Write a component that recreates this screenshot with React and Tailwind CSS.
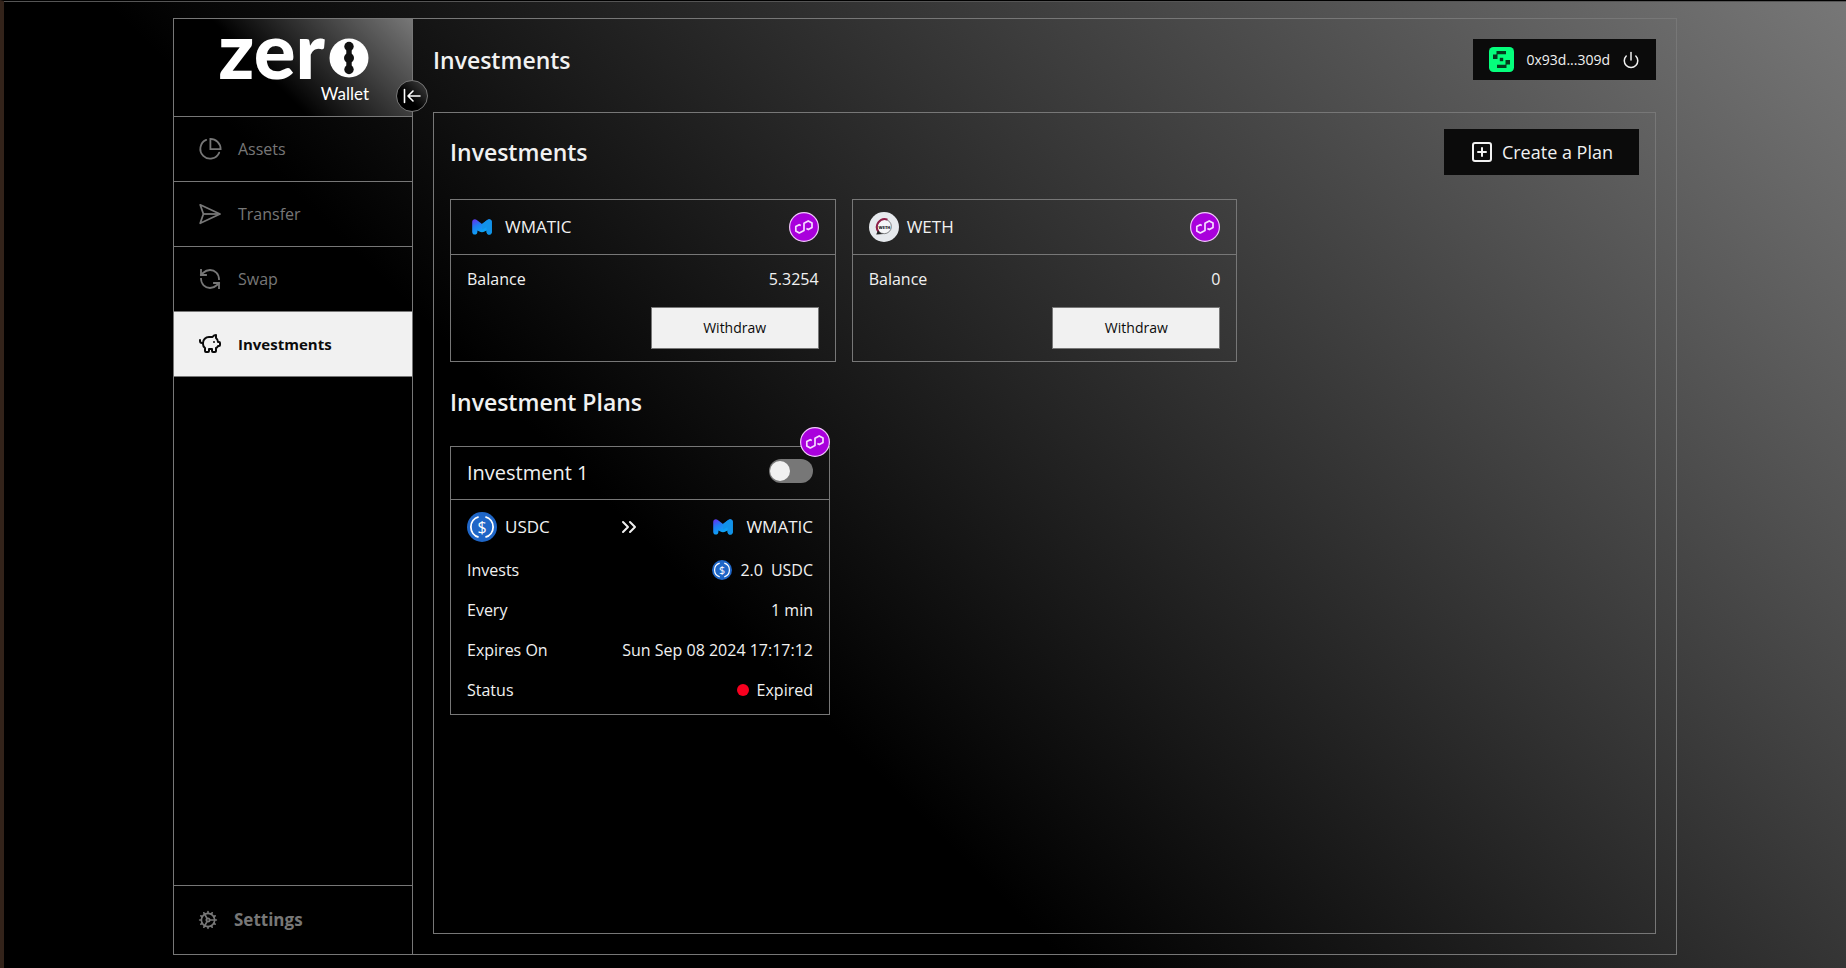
import { useState } from 'react'
import clsx from 'clsx'
import {
  ChevronsRight,
  Cog,
  PiggyBank,
  Power,
  RefreshCcw,
  SquarePlus,
} from 'lucide-react'

const balances = [
  { symbol: 'WMATIC', balance: '5.3254' },
  { symbol: 'WETH', balance: '0' },
]

const plans = [
  {
    name: 'Investment 1',
    from: 'USDC',
    to: 'WMATIC',
    amount: '2.0',
    frequency: '1 min',
    expiresOn: 'Sun Sep 08 2024 17:17:12',
    status: 'Expired',
  },
]

function PieIcon({ className }) {
  return (
    <svg
      viewBox="0 0 24 24"
      fill="none"
      stroke="currentColor"
      strokeWidth="1.8"
      className={className}
    >
      <path d="M8.2 2.9A9.8 9.8 0 1 0 21.2 15.6" strokeLinecap="round" />
      <path d="M12.4 1.9v10.2h10.2A10.2 10.2 0 0 0 12.4 1.9z" />
    </svg>
  )
}

function SendIcon({ className }) {
  return (
    <svg
      viewBox="0 0 24 24"
      fill="none"
      stroke="currentColor"
      strokeWidth="1.8"
      strokeLinejoin="round"
      className={className}
    >
      <path d="M2.2 2.8 22 12 2.2 21.2 5.4 12z" />
      <path d="M5.4 12H20" />
    </svg>
  )
}

function SwapIcon({ className }) {
  return (
    <RefreshCcw
      className={className}
      strokeWidth={1.8}
      strokeLinecap="square"
      strokeLinejoin="miter"
    />
  )
}

function CollapseIcon({ className }) {
  return (
    <svg
      viewBox="0 0 18 18"
      fill="none"
      stroke="currentColor"
      strokeWidth="1.6"
      strokeLinecap="round"
      strokeLinejoin="round"
      className={className}
    >
      <path d="M1.5 2.5v13M17 9H5M10 4 5 9l5 5" />
    </svg>
  )
}

function PolygonIcon({ className }) {
  return (
    <svg viewBox="0 0 30 30" fill="none" className={className}>
      <circle
        cx="15"
        cy="15"
        r="14.4"
        fill="#a900dc"
        stroke="#f0c8fa"
        strokeWidth="1.2"
      />
      <path
        d="M11.8 13.6 10.2 12.7 6.8 14.6v4.3l3.5 2.1 4.7-2.5v-7.2l4.2-2.4 3.8 2.2v4.3l-3.7 2.2-1.9-1"
        stroke="#f6dcff"
        strokeWidth="1.7"
        strokeLinejoin="round"
      />
    </svg>
  )
}

function MaticIcon({ className }) {
  return (
    <svg viewBox="0 0 30 30" className={className}>
      <defs>
        <linearGradient id="matic" x1="0" y1="0" x2="0.6" y2="1">
          <stop offset="0.1" stopColor="#5a3df0" />
          <stop offset="0.4" stopColor="#1f7cf5" />
          <stop offset="1" stopColor="#06b4f4" />
        </linearGradient>
      </defs>
      <path
        d="M5.2 10c0-2.400 2.600-3.400 4.600-2l5.200 4 5.200-4c2-1.400 4.600-.4 4.600 2v10c0 3.400-5.200 3.400-5.200 0v-1.600l-2 1.200c-1.600 1-3.600 1-5.200 0l-2-1.200V20c0 3.400-5.200 3.400-5.200 0z"
        fill="url(#matic)"
      />
      <path
        d="M20.200 8c2-1.400 4.600-.4 4.600 2v10c0 3.400-5.200 3.400-5.200 0v-5L15 17.400V12z"
        fill="#1292e8"
      />
    </svg>
  )
}

function WethIcon({ className }) {
  return (
    <svg viewBox="0 0 30 30" fill="none" className={className}>
      <circle cx="15" cy="15" r="15" fill="#e6e9ed" />
      <circle
        cx="15.2"
        cy="14.5"
        r="7.2"
        fill="#f5f6f8"
        stroke="#77787c"
        strokeWidth="0.9"
      />
      <path
        d="M9.500 20A8 8 0 0 1 18.500 7.600"
        stroke="#8e1f48"
        strokeWidth="2"
      />
      <path d="M7.200 22.500 9 18.500q2 3 5.500 3.500z" fill="#222" />
      <text
        x="15.5"
        y="16.8"
        textAnchor="middle"
        fontSize="4"
        fontWeight="800"
        fill="#1a1a1f"
        fontFamily="Open Sans, sans-serif"
      >
        WETH
      </text>
    </svg>
  )
}

function UsdcIcon({ className }) {
  return (
    <svg viewBox="0 0 30 30" fill="none" className={className}>
      <circle cx="15" cy="15" r="15" fill="#1f66c7" />
      <path
        d="M11.600 4.800a10.600 10.600 0 0 0 0 20.400M18.400 4.800a10.600 10.600 0 0 1 0 20.400"
        stroke="#fff"
        strokeWidth="1.8"
      />
      <text
        x="15"
        y="20.8"
        textAnchor="middle"
        fontSize="16"
        fontWeight="500"
        fill="#fff"
        fontFamily="Open Sans, sans-serif"
      >
        $
      </text>
    </svg>
  )
}

const tokenIcons = {
  WMATIC: MaticIcon,
  WETH: WethIcon,
  USDC: UsdcIcon,
}

function Avatar({ className }) {
  return (
    <svg viewBox="0 0 25 25" className={className}>
      <rect width="25" height="25" rx="4.5" fill="#05ff7c" />
      <g fill="#06381d">
        <path d="M7.500 4H17v3.200H8.500V12H4V7.500h3.500z" />
        <path d="M17.500 21H8v-3.200h8.500V13H21v4.500h-3.500z" />
        <rect x="10.8" y="10.8" width="3.4" height="3.4" />
      </g>
    </svg>
  )
}

function Logo() {
  return (
    <div className="flex flex-col items-end pt-px font-[Lato,sans-serif] text-white">
      <div className="flex items-end gap-1">
        <span className="text-[78px] leading-[58px] font-black">zer</span>
        <svg viewBox="0 0 40 40" className="size-10">
          <circle cx="20" cy="20" r="19.5" fill="#fff" />
          <g fill="#111">
            <circle cx="20" cy="8.5" r="4.7" />
            <circle cx="20" cy="20" r="5" />
            <circle cx="20" cy="31.5" r="4.7" />
            <rect x="17.3" y="9" width="5.4" height="22" />
          </g>
        </svg>
      </div>
      <span className="text-[17px] leading-8">Wallet</span>
    </div>
  )
}

const navItems = [
  { label: 'Assets', icon: PieIcon },
  { label: 'Transfer', icon: SendIcon },
  { label: 'Swap', icon: SwapIcon },
  { label: 'Investments', icon: PiggyBank },
]

function Sidebar() {
  return (
    <aside className="flex w-[239px] shrink-0 flex-col border-r border-[#777]">
      <div className="relative flex h-[98px] justify-end border-b border-[#777] bg-linear-[225deg,#777_0%,#000_60%] pr-[43px]">
        <Logo />
        <button
          aria-label="Collapse sidebar"
          className="absolute -right-4 bottom-1 flex size-8 items-center justify-center rounded-full border border-[#777] bg-linear-[225deg,#444_0%,#000_60%] text-white"
        >
          <CollapseIcon className="size-[18px]" />
        </button>
      </div>
      <nav>
        {navItems.map(({ label, icon: Icon }) => (
          <a
            key={label}
            href="#"
            className={clsx(
              'flex h-[65px] items-center gap-4 border-b border-[#777] px-6',
              label === 'Investments'
                ? 'bg-[#f1f1f1] text-[15px] font-bold text-[#0b0b0b]'
                : 'text-base text-[#777]'
            )}
          >
            <Icon className="size-6" />
            {label}
          </a>
        ))}
      </nav>
      <a
        href="#"
        className="mt-auto flex h-[69px] items-center gap-4 border-t border-[#777] px-6 text-[17px] font-bold text-[#777]"
      >
        <Cog className="size-5" />
        Settings
      </a>
    </aside>
  )
}

function Token({ symbol }) {
  const Icon = tokenIcons[symbol]
  return (
    <div className="flex items-center gap-2">
      <Icon className="size-[30px]" />
      <span className="text-[17px] leading-6">{symbol}</span>
    </div>
  )
}

function BalanceCard({ symbol, balance }) {
  return (
    <div className="border border-[#777]">
      <div className="flex items-center justify-between border-b border-[#777] px-4 py-3">
        <Token symbol={symbol} />
        <PolygonIcon className="size-[30px]" />
      </div>
      <div className="flex flex-col gap-4 px-4 py-3">
        <div className="flex justify-between">
          <span className="font-medium">Balance</span>
          <span>{balance}</span>
        </div>
        <button className="h-[42px] w-[168px] self-end border border-[#777] bg-[#f1f1f1] text-sm text-[#0b0b0b]">
          Withdraw
        </button>
      </div>
    </div>
  )
}

function PlanRow({ label, children }) {
  return (
    <div className="flex items-center justify-between">
      <span className="font-medium">{label}</span>
      <div className="flex items-center gap-2">{children}</div>
    </div>
  )
}

function PlanCard({ plan }) {
  const [enabled, setEnabled] = useState(false)

  return (
    <div className="relative w-[380px] max-w-full border border-[#777]">
      <PolygonIcon className="absolute -top-5 -right-px size-[30px]" />
      <div className="flex items-start justify-between border-b border-[#777] px-4 py-3">
        <h3 className="text-xl leading-7">{plan.name}</h3>
        <input
          type="checkbox"
          role="switch"
          aria-label={`Enable ${plan.name}`}
          checked={enabled}
          onChange={(e) => setEnabled(e.target.checked)}
          className="relative h-6 w-11 appearance-none rounded-full bg-[#777] before:absolute before:top-0.5 before:left-px before:size-5 before:rounded-full before:bg-[#f1f1f1] checked:before:left-[23px]"
        />
      </div>
      <div className="flex flex-col gap-4 px-4 py-3">
        <div className="flex items-center justify-between">
          <Token symbol={plan.from} />
          <ChevronsRight className="size-6" />
          <Token symbol={plan.to} />
        </div>
        <PlanRow label="Invests">
          <UsdcIcon className="size-5" />
          <span className="font-medium">{plan.amount}</span>
          <span className="font-medium">{plan.from}</span>
        </PlanRow>
        <PlanRow label="Every">
          <span>{plan.frequency}</span>
        </PlanRow>
        <PlanRow label="Expires On">
          <span>{plan.expiresOn}</span>
        </PlanRow>
        <PlanRow label="Status">
          <span className="size-3 rounded-full bg-[#f8001f]" />
          <span>{plan.status}</span>
        </PlanRow>
      </div>
    </div>
  )
}

function App() {
  return (
    <div className="h-screen border-t border-l-4 border-t-black border-l-[#33231a] bg-black font-['Open_Sans',sans-serif] text-base text-[#f1f1f1]">
      <div className="flex h-full justify-center border-t border-[#555] bg-linear-[225deg,#777_0%,#000_62%] px-4 pt-4 pb-[13px]">
        <div className="flex w-full max-w-[1504px] border border-[#777]">
          <Sidebar />
          <main className="flex min-w-0 flex-1 flex-col p-5">
            <header className="mb-8 flex items-center justify-between">
              <h1 className="text-[23px] leading-8 font-semibold">
                Investments
              </h1>
              <button className="flex h-[41px] items-center gap-3 bg-[#0b0b0b] px-4 text-sm">
                <Avatar className="size-[25px]" />
                0x93d...309d
                <Power className="size-[18px]" />
              </button>
            </header>

            <section className="flex-1 border border-[#777] p-4">
              <div className="mb-6 flex items-center justify-between">
                <h2 className="text-[23px] leading-8 font-semibold">
                  Investments
                </h2>
                <button className="flex h-[46px] items-center gap-2 bg-[#0b0b0b] px-[26px] text-lg">
                  <SquarePlus className="size-6" />
                  Create a Plan
                </button>
              </div>
              <div className="grid grid-cols-3 gap-4">
                {balances.map((item) => (
                  <BalanceCard key={item.symbol} {...item} />
                ))}
              </div>

              <h2 className="mt-6 mb-7 text-[23px] leading-8 font-semibold">
                Investment Plans
              </h2>
              {plans.map((plan) => (
                <PlanCard key={plan.name} plan={plan} />
              ))}
            </section>
          </main>
        </div>
      </div>
    </div>
  )
}

export default App
